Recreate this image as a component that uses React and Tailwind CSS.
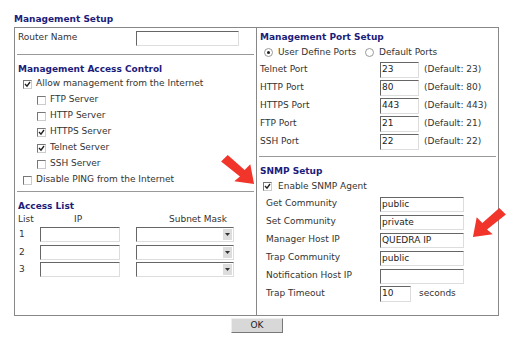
import React from "react";

const Box = ({ checked }) => (
  <span className="inline-flex w-[9px] h-[9px] shrink-0 items-center justify-center border border-t-[#777] border-l-[#777] border-b-[#ccc] border-r-[#ccc] bg-white">
    {checked && (
      <svg width="7" height="7" viewBox="0 0 7 7">
        <path d="M1 3 L3 5.2 L6 1" fill="none" stroke="#222" strokeWidth="1.4" />
      </svg>
    )}
  </span>
);

const Radio = ({ on }) => (
  <span className="inline-flex w-[9px] h-[9px] shrink-0 items-center justify-center rounded-full border border-[#999] bg-white">
    {on && <span className="w-[3px] h-[3px] rounded-full bg-[#222]" />}
  </span>
);

const Field = ({ value = "", w = "w-[103px]", h = "h-[15px]" }) => (
  <div
    className={`${w} ${h} border border-t-[#666] border-l-[#666] border-b-[#ddd] border-r-[#ddd] bg-white pl-[1px] text-[9px] leading-[13px] text-[#222]`}
  >
    {value}
  </div>
);

const Select = () => (
  <div className="w-[98px] h-[15px] flex border border-t-[#666] border-l-[#666] border-b-[#ddd] border-r-[#ddd] bg-white">
    <div className="flex-1" />
    <div className="w-[9px] my-[1px] mr-[1px] bg-[#ddd] flex items-center justify-center">
      <svg width="5" height="3" viewBox="0 0 5 3">
        <path d="M0 0 L5 0 L2.5 3 Z" fill="#333" />
      </svg>
    </div>
  </div>
);

const Title = ({ children, className = "" }) => (
  <div className={`font-bold text-[#1c1c7a] text-[9px] ${className}`}>{children}</div>
);

const Check = ({ checked, label, indent }) => (
  <div className={`h-4 flex items-center gap-[4px] ${indent ? "pl-[22px]" : "pl-[8px]"}`}>
    <Box checked={checked} />
    <span>{label}</span>
  </div>
);

const Arrow = ({ className, flip }) => (
  <svg
    className={className}
    width="36"
    height="32"
    viewBox="0 0 38 34"
    style={flip ? { transform: "scaleX(-1)" } : undefined}
  >
    <path d="M0 8 L7 1 L25 17 L31 11 L35 32 L14 29 L20 24 Z" fill="#f2352b" />
  </svg>
);

const ports = [
  ["Telnet Port", "23", "(Default: 23)"],
  ["HTTP Port", "80", "(Default: 80)"],
  ["HTTPS Port", "443", "(Default: 443)"],
  ["FTP Port", "21", "(Default: 21)"],
  ["SSH Port", "22", "(Default: 22)"],
];

const snmp = [
  ["Get Community", "public"],
  ["Set Community", "private"],
  ["Manager Host IP", "QUEDRA IP"],
  ["Trap Community", "public"],
  ["Notification Host IP", ""],
];

export default function App() {
  return (
    <div className="w-[525px] h-[337px] bg-white relative text-[9px] text-[#333] font-['DejaVu_Sans',Verdana,sans-serif] overflow-hidden">
      <div className="pl-[14px] pt-[13px]">
        <Title className="h-[14px]">Management Setup</Title>
        <div className="w-[485px] h-[289px] border border-[#888] flex">
          {/* left column */}
          <div className="w-[242px] border-r border-[#888] flex flex-col">
            <div className="h-[20px] flex items-center pl-[3px]">
              <span className="w-[118px]">Router Name</span>
              <Field />
            </div>
            <div className="mx-[2px] mt-[6px] border-t border-[#999]" />
            <Title className="pl-[3px] h-[21px] flex items-end">Management Access Control</Title>
            <Check checked label="Allow management from the Internet" />
            <Check indent label="FTP Server" />
            <Check indent label="HTTP Server" />
            <Check indent checked label="HTTPS Server" />
            <Check indent checked label="Telnet Server" />
            <Check indent label="SSH Server" />
            <Check label="Disable PING from the Internet" />
            <div className="mx-[2px] mt-[3px] border-t border-[#999]" />
            <Title className="pl-[3px] h-[21px] flex items-end">Access List</Title>
            <div className="h-[13px] flex items-center pl-[3px]">
              <span className="w-[56px]">List</span>
              <span className="w-[77px]">IP</span>
              <span className="pl-[18px]">Subnet Mask</span>
            </div>
            {["1", "2", "3"].map((n) => (
              <div key={n} className="h-[17.5px] flex items-center pl-[4px]">
                <span className="w-[21px]">{n}</span>
                <Field w="w-[80px]" />
                <div className="w-[16px]" />
                <Select />
              </div>
            ))}
          </div>
          {/* right column */}
          <div className="flex-1 flex flex-col">
            <Title className="pl-[3px] h-[16px] flex items-end">Management Port Setup</Title>
            <div className="h-[17px] flex items-center pl-[7px] gap-[5px]">
              <Radio on />
              <span className="w-[82px]">User Define Ports</span>
              <Radio />
              <span>Default Ports</span>
            </div>
            {ports.map(([l, v, d]) => (
              <div key={l} className="h-[18px] flex items-center pl-[3px]">
                <span className="w-[120px]">{l}</span>
                <Field value={v} w="w-[39px]" h="h-[16px]" />
                <span className="pl-[5px]">{d}</span>
              </div>
            ))}
            <div className="mx-[2px] mt-[5px] border-t border-[#999]" />
            <Title className="pl-[3px] h-[21px] flex items-end">SNMP Setup</Title>
            <div className="h-[17px] flex items-center gap-[6px] pl-[6px]">
              <Box checked />
              <span>Enable SNMP Agent</span>
            </div>
            {snmp.map(([l, v]) => (
              <div key={l} className="h-[18px] flex items-center pl-[9px]">
                <span className="w-[114px]">{l}</span>
                <Field value={v} w="w-[84px]" />
              </div>
            ))}
            <div className="h-[18px] flex items-center pl-[9px]">
              <span className="w-[114px]">Trap Timeout</span>
              <Field value="10" w="w-[31px]" h="h-[16px]" />
              <span className="pl-[8px]">seconds</span>
            </div>
          </div>
        </div>
        <div className="flex mt-[2px]">
          <div className="w-[52px] h-[15px] ml-[217px] bg-[#d8d8d8] border border-t-[#eee] border-l-[#eee] border-b-[#777] border-r-[#777] flex items-center justify-center text-[9px] text-[#222]">
            OK
          </div>
        </div>
      </div>
      <Arrow className="absolute left-[221px] top-[154px]" />
      <Arrow className="absolute left-[470px] top-[207px]" flip />
    </div>
  );
}
